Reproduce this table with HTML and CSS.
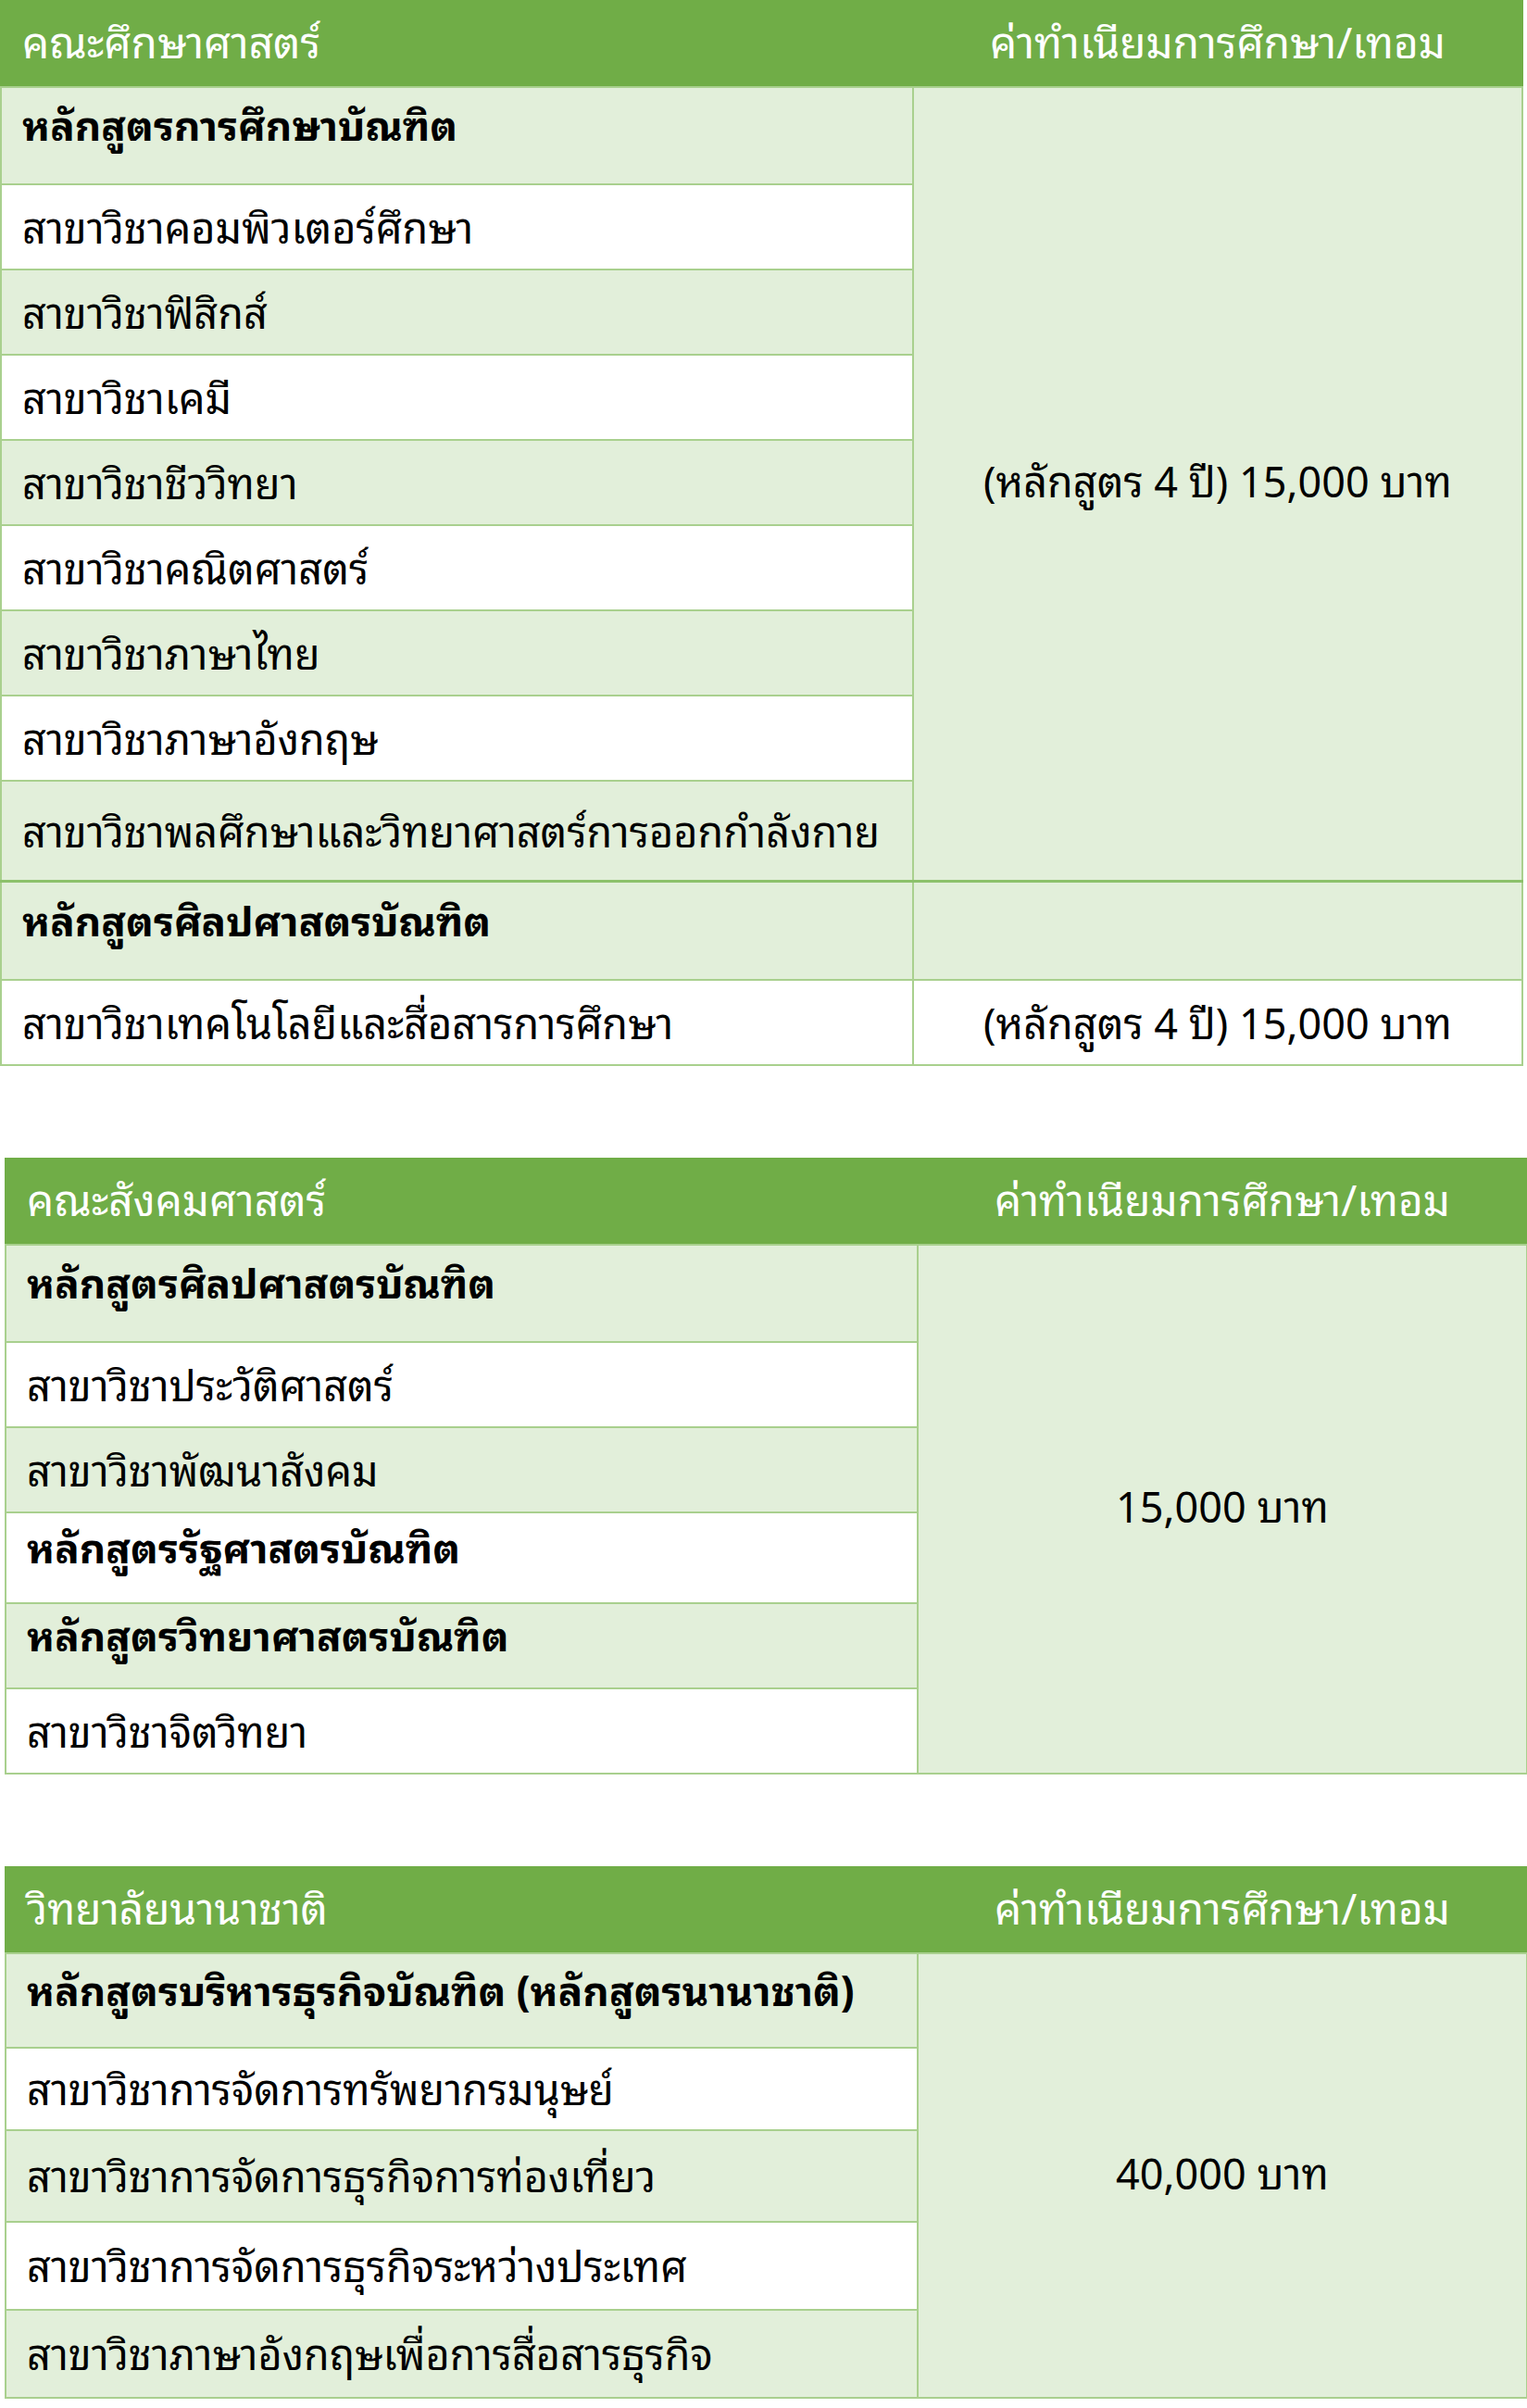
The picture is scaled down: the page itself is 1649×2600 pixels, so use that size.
FILE: index.html
```html
<!DOCTYPE html>
<html lang="th">
<head>
<meta charset="utf-8">
<title>ค่าทำเนียมการศึกษา</title>
<link rel="stylesheet" href="styles.css">
</head>
<body>
<div class="page">
  <table class="fees t1">
    <colgroup><col class="c1"><col class="c2"></colgroup>
    <tr class="head"><th class="fac">คณะศึกษาศาสตร์</th><th class="fee">ค่าทำเนียมการศึกษา/เทอม</th></tr>
    <tr class="prog h104"><td class="lt">หลักสูตรการศึกษาบัณฑิต</td><td class="price lt" rowspan="9">(หลักสูตร 4 ปี) 15,000 บาท</td></tr>
    <tr class="row"><td class="wh">สาขาวิชาคอมพิวเตอร์ศึกษา</td></tr>
    <tr class="row"><td class="lt">สาขาวิชาฟิสิกส์</td></tr>
    <tr class="row"><td class="wh">สาขาวิชาเคมี</td></tr>
    <tr class="row"><td class="lt">สาขาวิชาชีววิทยา</td></tr>
    <tr class="row"><td class="wh">สาขาวิชาคณิตศาสตร์</td></tr>
    <tr class="row"><td class="lt">สาขาวิชาภาษาไทย</td></tr>
    <tr class="row"><td class="wh">สาขาวิชาภาษาอังกฤษ</td></tr>
    <tr class="row h108"><td class="lt">สาขาวิชาพลศึกษาและวิทยาศาสตร์การออกกำลังกาย</td></tr>
    <tr class="prog h105 sep"><td class="lt">หลักสูตรศิลปศาสตรบัณฑิต</td><td class="lt"></td></tr>
    <tr class="row"><td class="wh">สาขาวิชาเทคโนโลยีและสื่อสารการศึกษา</td><td class="price single wh">(หลักสูตร 4 ปี) 15,000 บาท</td></tr>
  </table>

  <table class="fees t2">
    <colgroup><col class="c1"><col class="c2"></colgroup>
    <tr class="head"><th class="fac">คณะสังคมศาสตร์</th><th class="fee">ค่าทำเนียมการศึกษา/เทอม</th></tr>
    <tr class="prog h104"><td class="lt">หลักสูตรศิลปศาสตรบัณฑิต</td><td class="price lt" rowspan="6">15,000 บาท</td></tr>
    <tr class="row"><td class="wh">สาขาวิชาประวัติศาสตร์</td></tr>
    <tr class="row"><td class="lt">สาขาวิชาพัฒนาสังคม</td></tr>
    <tr class="prog h97"><td class="wh">หลักสูตรรัฐศาสตรบัณฑิต</td></tr>
    <tr class="prog h91"><td class="lt">หลักสูตรวิทยาศาสตรบัณฑิต</td></tr>
    <tr class="row"><td class="wh">สาขาวิชาจิตวิทยา</td></tr>
  </table>

  <table class="fees t3">
    <colgroup><col class="c1"><col class="c2"></colgroup>
    <tr class="head"><th class="fac">วิทยาลัยนานาชาติ</th><th class="fee">ค่าทำเนียมการศึกษา/เทอม</th></tr>
    <tr class="prog h101"><td class="lt">หลักสูตรบริหารธุรกิจบัณฑิต (หลักสูตรนานาชาติ)</td><td class="price lt" rowspan="5">40,000 บาท</td></tr>
    <tr class="row h89"><td class="wh">สาขาวิชาการจัดการทรัพยากรมนุษย์</td></tr>
    <tr class="row h99"><td class="lt">สาขาวิชาการจัดการธุรกิจการท่องเที่ยว</td></tr>
    <tr class="row h93"><td class="wh">สาขาวิชาการจัดการธุรกิจระหว่างประเทศ</td></tr>
    <tr class="row h93"><td class="lt">สาขาวิชาภาษาอังกฤษเพื่อการสื่อสารธุรกิจ</td></tr>
  </table>
</div>
</body>
</html>
```

FILE: styles.css
```css
html, body {
  margin: 0;
  padding: 0;
  background: #ffffff;
}

.page {
  display: flex;
  flex-direction: column;
  gap: 99px;
  font-family: "Noto Sans Thai Looped", "Loma", "Waree", "Garuda", "Noto Sans Thai", "Noto Sans", sans-serif;
  color: #000000;
}

.fees {
  border-collapse: collapse;
  table-layout: fixed;
  width: 1643px;
}

.t2, .t3 {
  margin-left: 5px;
}

.c1 { width: 985px; }
.c2 { width: 658px; }

.fees th,
.fees td {
  border: 2px solid #a9d08e;
  padding: 0 0 0 22px;
  font-size: 45px;
  line-height: 1.2;
  text-align: left;
  vertical-align: middle;
  white-space: nowrap;
}

.head th {
  height: 82px;
  padding-bottom: 9px;
  background: #70ad47;
  color: #ffffff;
  font-weight: normal;
  font-size: 46px;
  border-color: #70ad47;
  border-bottom-color: #a9d08e;
}

.head th.fee {
  text-align: center;
  padding: 0 0 9px 0;
  border-left-color: #8cbf6a;
}

.row td {
  height: 85px;
  padding-bottom: 5px;
}

.prog td {
  font-weight: bold;
  font-size: 44px;
  padding-bottom: 28px;
}

.h104 td { height: 75px; }
.h105 td { height: 76px; }
.h97 td { height: 68px; }
.h91 td { height: 62px; }
.h101 td { height: 72px; }
.row.h108 td { height: 101px; }
.row.h89 td { height: 82px; }
.row.h99 td { height: 92px; }
.row.h93 td { height: 88px; }

.lt { background: #e2efda; }
.wh { background: #ffffff; }

.fees td.price {
  text-align: center;
  padding: 0 0 11px 0;
  font-weight: normal;
  font-size: 45px;
}

.fees td.price.single {
  padding-bottom: 5px;
}

.sep td {
  border-top: 3px solid #8cc16b;
}
```
